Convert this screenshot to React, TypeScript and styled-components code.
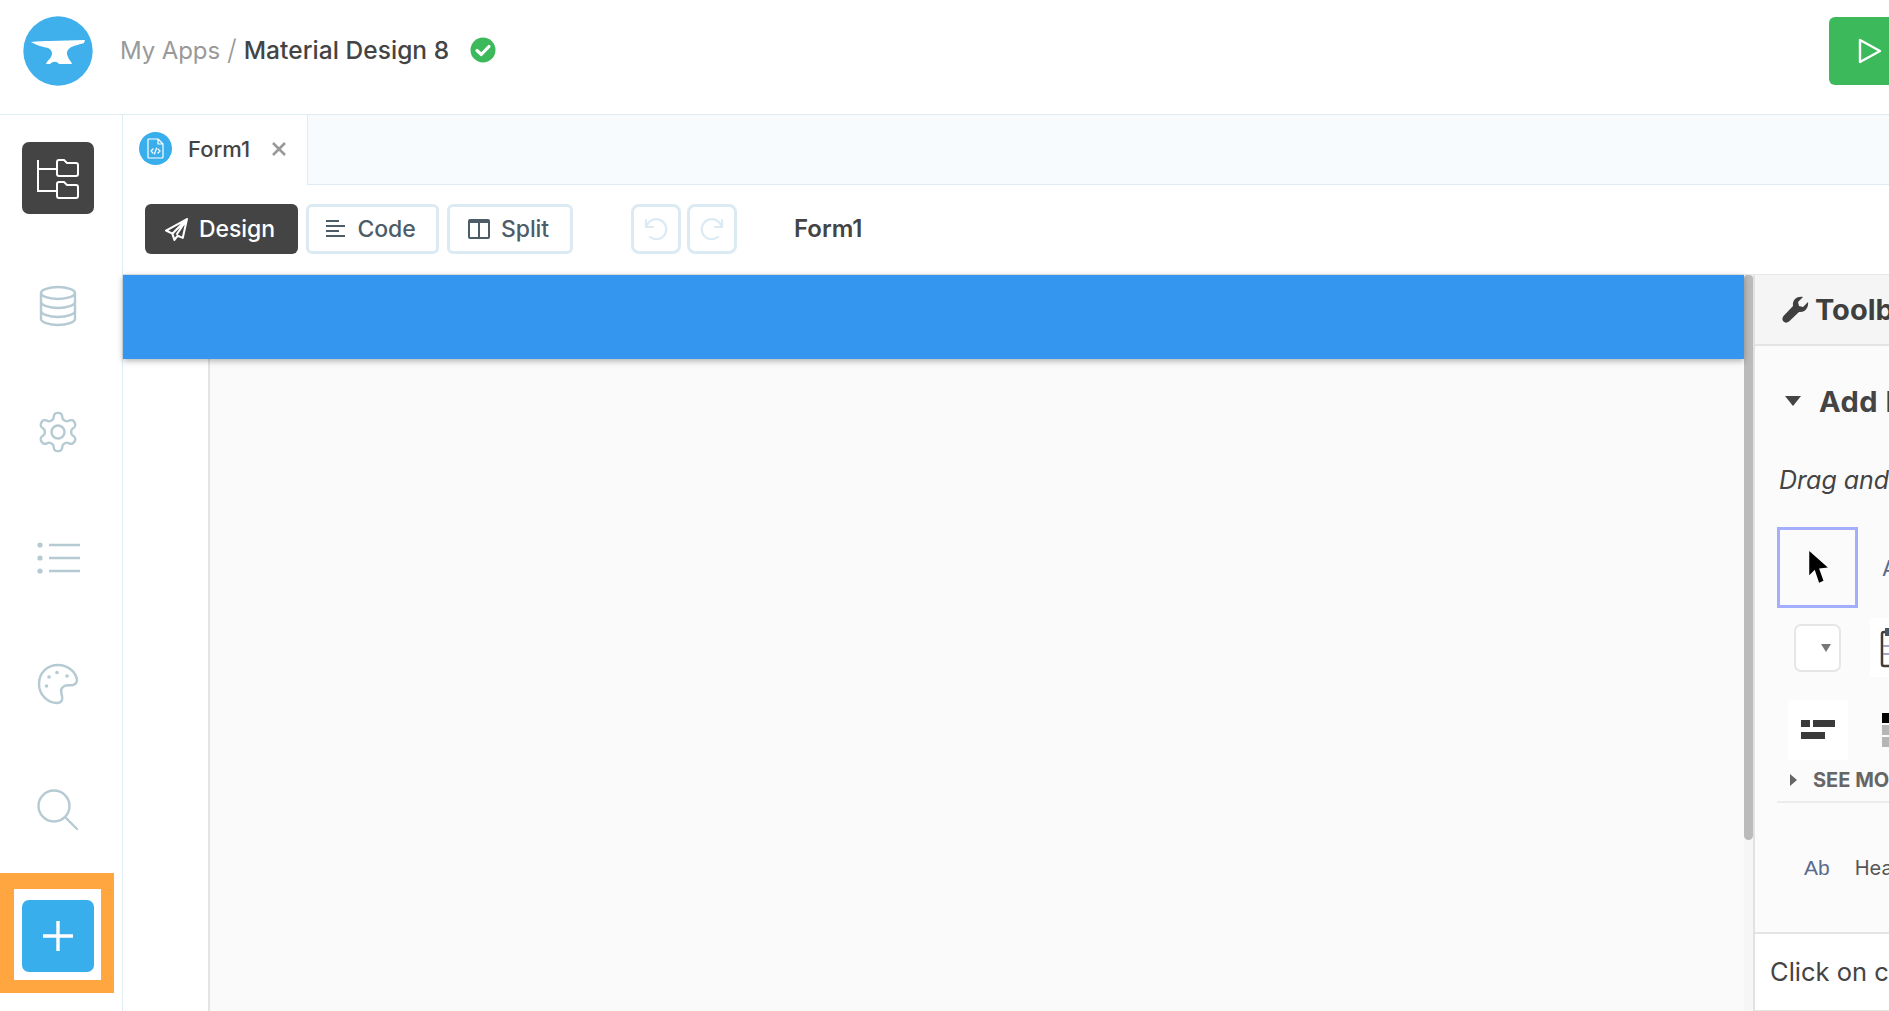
import React from "react";
import styled, { createGlobalStyle } from "styled-components";

const Global = createGlobalStyle`
  html, body { margin: 0; padding: 0; background: #fff; }
  body { font-family: Inter, "Liberation Sans", sans-serif; color: #444; }
  * { box-sizing: border-box; }
  svg { flex: none; }
`;

const Page = styled.div`
  width: 1889px; height: 1011px; overflow: hidden; display: flex; flex-direction: column; position: relative;
`;
const Header = styled.header`
  height: 115px; flex: none; display: flex; align-items: flex-start; padding: 16px 0 0 23px;
  border-bottom: 1px solid #dfecf3; background: #fff;
`;
const Logo = styled.svg` width: 70px; height: 70px; flex: none; `;
const Crumbs = styled.div`
  display: flex; align-items: center; height: 70px; margin-left: 27px; padding-bottom: 2px; font-size: 24.5px; white-space: nowrap; flex: 1;
`;
const CrumbLink = styled.span` color: #999; font-weight: 400; font-size: 24px; letter-spacing: -0.1px; `;
const Slash = styled.span` color: #999; margin: 0 7px 0 7px; font-weight: 300; font-size: 28px; `;
const CrumbTitle = styled.span` color: #444; font-weight: 500; letter-spacing: 0.05px; `;
const Check = styled.svg` width: 26px; height: 26px; margin-left: 21px; flex: none; `;
const RunButton = styled.div`
  width: 60px; height: 68px; margin-top: 1px; background: #3cb95a; border-radius: 6px 0 0 6px;
  display: flex; align-items: center; padding-left: 29px; flex: none;
`;

const Body = styled.div` flex: 1; display: flex; min-height: 0; `;
const Sidebar = styled.nav`
  width: 123px; flex: none; border-right: 1px solid #dfecf3; background: #fff;
  display: flex; flex-direction: column; align-items: flex-start; padding: 27px 0 0 22px; gap: 54px;
`;
const SideItem = styled.div<{ $active?: boolean; $add?: boolean }>`
  width: 72px; height: 72px; flex: none; border-radius: 7px; display: flex; align-items: center; justify-content: center;
  background: ${p => (p.$active ? "#444" : p.$add ? "#38aeec" : "transparent")};
  margin-bottom: ${p => (p.$active ? "2px" : "0")};
`;
const Highlight = styled.div`
  position: absolute; left: 0; top: 873px; width: 114px; height: 120px; pointer-events: none;
  border: solid #ffa640; border-width: 16px 13px 13px 14px;
`;

const Main = styled.div` flex: 1; min-width: 0; display: flex; flex-direction: column; `;
const TabStrip = styled.div` height: 70px; flex: none; display: flex; background: #f7fbfe; border-bottom: 1px solid #dfecf3; `;
const Tab = styled.div`
  width: 185px; height: 70px; flex: none; background: #fff; border-right: 1px solid #dfecf3;
  display: flex; align-items: center; padding: 0 0 3px 16px;
`;
const TabBadge = styled.div`
  width: 33px; height: 33px; border-radius: 50%; background: #38aeec; display: flex; align-items: center; justify-content: center; flex: none;
`;
const TabName = styled.span` margin-left: 16px; font-size: 22px; font-weight: 500; color: #444; `;
const TabClose = styled.svg` width: 14px; height: 14px; margin-left: 22px; flex: none; `;

const Toolbar = styled.div` height: 90px; flex: none; display: flex; align-items: flex-start; padding: 19px 0 0 22px; background: #fff; `;
const ModeButton = styled.div<{ $active?: boolean; $w: number }>`
  width: ${p => p.$w}px; height: 50px; border-radius: 6px; display: flex; align-items: center; justify-content: center; gap: 11px;
  font-size: 23px; font-weight: 500; letter-spacing: -0.1px; margin-right: 8px; flex: none;
  padding-right: 3px;
  background: ${p => (p.$active ? "#444" : "#fff")};
  color: ${p => (p.$active ? "#fff" : "#4d5d68")};
  border: ${p => (p.$active ? "none" : "3px solid #dcebf3")};
`;
const HistoryButton = styled.div<{ $first?: boolean }>`
  width: 50px; height: 50px; border: 3px solid #dcebf3; border-radius: 8px; background: #fff; flex: none;
  display: flex; align-items: center; justify-content: center;
  margin-left: ${p => (p.$first ? "50px" : "0")};
  margin-right: 6px;
`;
const FormTitle = styled.span` margin-left: 51px; line-height: 50px; font-size: 24px; font-weight: 600; color: #444; `;

const Content = styled.div` flex: 1; min-height: 0; display: flex; border-top: 1px solid #e8e8e8; margin-top: -1px; `;
const Canvas = styled.div` width: 1621px; flex: none; display: flex; flex-direction: column; position: relative; `;
const AppBar = styled.div` height: 84px; flex: none; background: #3596ef; box-shadow: 0 2px 6px rgba(0,0,0,.3); position: relative; z-index: 1; `;
const CanvasBody = styled.div` flex: 1; display: flex; `;
const Gutter = styled.div` width: 87px; flex: none; background: #fff; border-right: 2px solid #e4e4e4; `;
const Sheet = styled.div` flex: 1; background: #fafafa; `;
const ScrollTrack = styled.div` width: 11px; flex: none; background: #f6f6f6; border-right: 2px solid #e2e2e2; `;
const ScrollThumb = styled.div` width: 9px; height: 565px; background: #bbb; border-radius: 4px 4px 5px 5px; `;

const Panel = styled.aside` flex: 1; min-width: 0; display: flex; flex-direction: column; overflow: hidden; white-space: nowrap; background: #fbfbfb; `;
const PanelHeader = styled.div`
  height: 71px; flex: none; background: #f5f5f5; border-bottom: 2px solid #e4e4e4; display: flex; align-items: center; padding-left: 27px; gap: 6px;
  font-size: 29px; font-weight: 700; color: #3f3f3f;
`;
const PanelBody = styled.div` flex: 1; min-height: 0; overflow: hidden; position: relative; `;
const SectionTitle = styled.div`
  display: flex; align-items: center; height: 40px; margin-top: 35px; padding-left: 30px; gap: 18px;
  font-size: 29px; font-weight: 700; color: #444; letter-spacing: 0.5px;
`;
const Hint = styled.div` margin: 44px 0 0 24px; height: 30px; line-height: 30px; font-size: 25px; font-style: italic; color: #444; `;
const TileRow = styled.div<{ $top: number; $gap: number }>`
  display: flex; align-items: center; margin-top: ${p => p.$top}px; gap: ${p => p.$gap}px;
`;
const SelectedTile = styled.div`
  width: 81px; height: 81px; margin-left: 22px; flex: none; border: 3px solid #a3aeff; display: flex; align-items: center; justify-content: center;
`;
const TilePeek = styled.span` font-size: 22px; color: #5b6a8c; `;
const DropTile = styled.div`
  width: 47px; height: 48px; margin-left: 39px; flex: none; background: #fff; border: 2px solid #e6e6e6; border-radius: 7px;
  display: flex; align-items: center; justify-content: flex-end; padding: 0 8px 0 0;
`;
const WhiteTile = styled.div<{ $w: number; $ml: number; $h: number }>`
  width: ${p => p.$w}px; height: ${p => p.$h}px; margin-left: ${p => p.$ml}px; flex: none; background: #fff;
  display: flex; align-items: center; justify-content: center;
`;
const SeeMore = styled.div`
  display: flex; align-items: center; height: 30px; margin: 5px 0 0 35px; gap: 16px;
  font-size: 20px; font-weight: 700; color: #666;
`;
const Divider = styled.div` height: 2px; margin: 6px 0 0 22px; background: #ececec; `;
const TextRow = styled.div` display: flex; align-items: center; height: 30px; margin: 50px 0 0 49px; `;
const AbGlyph = styled.span` font-family: "Liberation Sans", sans-serif; font-size: 21px; color: #5b6a8c; `;
const HeadingLabel = styled.span` margin-left: 25px; font-size: 20px; color: #555; `;
const PanelFoot = styled.div`
  height: 79px; flex: none; background: #fff; border-top: 2px solid #e4e4e4; border-bottom: 1px solid #e4e4e4;
  display: flex; align-items: center; padding: 0 0 2px 15px; font-size: 25.5px; color: #444;
`;

const ic = { fill: "none", stroke: "#b5cad3", strokeWidth: 2.4, strokeLinecap: "round", strokeLinejoin: "round" } as const;

export default function App() {
  return (
    <Page>
      <Global />
      <Header>
        <Logo viewBox="23 16 70 70">
          <circle cx="58" cy="51" r="34.7" fill="#40b0ec" />
          <path d="M31 42 C38 41 44 41 50 41 L85 40 L84 43 C78 45 72 46 70 48 C67 50 66 53 68 57 C69 60 71 61 72 64 L59 64 C57 61 53 61 50 64 L46 64 C47 61 49 60 51 57 C53 53 52 50 48 48 C42 47 36 45 31 42 Z" fill="#fff" />
        </Logo>
        <Crumbs>
          <CrumbLink>My Apps</CrumbLink>
          <Slash>/</Slash>
          <CrumbTitle>Material Design 8</CrumbTitle>
          <Check viewBox="0 0 26 26">
            <circle cx="13" cy="13" r="12.5" fill="#3cb95a" />
            <path d="M7 13.5 L11.3 17.5 L19 9.5" fill="none" stroke="#fff" strokeWidth="3.2" strokeLinecap="round" strokeLinejoin="round" />
          </Check>
        </Crumbs>
        <RunButton>
          <svg width="24" height="26" viewBox="0 0 24 26">
            <path d="M2 2 L22 13 L2 24 Z" fill="none" stroke="#fff" strokeWidth="2.4" strokeLinejoin="round" />
          </svg>
        </RunButton>
      </Header>
      <Body>
        <Sidebar>
          <SideItem $active>
            <svg width="42" height="42" viewBox="0 0 42 42" fill="none" stroke="#fff" strokeWidth="2">
              <path d="M1 3 V34 H20 M1 12 H20" />
              <path d="M20 5 Q20 3 22 3 H27 L30 6 H39 Q41 6 41 8 V17 Q41 19 39 19 H22 Q20 19 20 17 Z" />
              <path d="M20 27 Q20 25 22 25 H27 L30 28 H39 Q41 28 41 30 V39 Q41 41 39 41 H22 Q20 41 20 39 Z" />
            </svg>
          </SideItem>
          <SideItem>
            <svg width="38" height="42" viewBox="0 0 38 42" {...ic}>
              <ellipse cx="19" cy="8" rx="17" ry="6" />
              <path d="M2 8 V34 C2 37 10 40 19 40 S36 37 36 34 V8" />
              <path d="M2 17 C2 20 10 23 19 23 S36 20 36 17" />
              <path d="M2 26 C2 29 10 32 19 32 S36 29 36 26" />
            </svg>
          </SideItem>
          <SideItem>
            <svg width="46" height="46" viewBox="0 0 24 24" fill="none" stroke="#b5cad3" strokeWidth="1.25" strokeLinecap="round" strokeLinejoin="round">
              <path d="M12.22 2h-.44a2 2 0 0 0-2 2v.18a2 2 0 0 1-1 1.73l-.43.25a2 2 0 0 1-2 0l-.15-.08a2 2 0 0 0-2.73.73l-.22.38a2 2 0 0 0 .73 2.73l.15.1a2 2 0 0 1 1 1.72v.51a2 2 0 0 1-1 1.74l-.15.09a2 2 0 0 0-.73 2.73l.22.38a2 2 0 0 0 2.73.73l.15-.08a2 2 0 0 1 2 0l.43.25a2 2 0 0 1 1 1.73V20a2 2 0 0 0 2 2h.44a2 2 0 0 0 2-2v-.18a2 2 0 0 1 1-1.73l.43-.25a2 2 0 0 1 2 0l.15.08a2 2 0 0 0 2.73-.73l.22-.39a2 2 0 0 0-.73-2.73l-.15-.08a2 2 0 0 1-1-1.74v-.5a2 2 0 0 1 1-1.74l.15-.09a2 2 0 0 0 .73-2.73l-.22-.38a2 2 0 0 0-2.73-.73l-.15.08a2 2 0 0 1-2 0l-.43-.25a2 2 0 0 1-1-1.73V4a2 2 0 0 0-2-2z" />
              <circle cx="12" cy="12" r="3.4" />
            </svg>
          </SideItem>
          <SideItem>
            <svg width="44" height="32" viewBox="0 0 44 32" fill="none" stroke="#b5cad3" strokeWidth="2.4">
              <circle cx="4" cy="3" r="2.6" fill="#b5cad3" stroke="none" />
              <circle cx="4" cy="16" r="2.6" fill="#b5cad3" stroke="none" />
              <circle cx="4" cy="29" r="2.6" fill="#b5cad3" stroke="none" />
              <path d="M13 3 H44 M13 16 H44 M13 29 H44" />
            </svg>
          </SideItem>
          <SideItem>
            <svg width="42" height="42" viewBox="0 0 42 42" {...ic}>
              <path d="M21 2 C10 2 2 10 2 21 C2 32 11 40 20 40 C25 40 26 36 25 33 C24 29 23 26 26 24 C29 21 32 23 36 22 C39 21 40 19 40 17 C39 9 31 2 21 2 Z" />
              <circle cx="12" cy="14" r="1.8" fill="#b5cad3" stroke="none" />
              <circle cx="20" cy="9.5" r="1.8" fill="#b5cad3" stroke="none" />
              <circle cx="30" cy="13" r="1.8" fill="#b5cad3" stroke="none" />
              <circle cx="9.5" cy="23" r="1.8" fill="#b5cad3" stroke="none" />
            </svg>
          </SideItem>
          <SideItem>
            <svg width="42" height="42" viewBox="0 0 42 42" {...ic}>
              <circle cx="17" cy="17" r="15.5" />
              <path d="M28.5 28.5 L40 40" />
            </svg>
          </SideItem>
          <SideItem $add>
            <svg width="32" height="32" viewBox="0 0 32 32" stroke="#fff" strokeWidth="3.4">
              <path d="M16 1 V31 M1 16 H31" />
            </svg>
          </SideItem>
        </Sidebar>
        <Main>
          <TabStrip>
            <Tab>
              <TabBadge>
                <svg width="17" height="21" viewBox="0 0 17 21" fill="none" stroke="#fff" strokeWidth="1.2" strokeLinecap="round" strokeLinejoin="round">
                  <path d="M2 1 H11 L16 6 V19 Q16 20 15 20 H2 Q1 20 1 19 V2 Q1 1 2 1 Z M11 1 V6 H16" />
                  <path d="M6 11 L4 13 L6 15 M11 11 L13 13 L11 15 M9.5 10 L7.5 16" />
                </svg>
              </TabBadge>
              <TabName>Form1</TabName>
              <TabClose viewBox="0 0 14 14" stroke="#999" strokeWidth="2.6">
                <path d="M1 1 L13 13 M13 1 L1 13" />
              </TabClose>
            </Tab>
          </TabStrip>
          <Toolbar>
            <ModeButton $active $w={153}>
              <svg width="23" height="23" viewBox="0 0 22 22" fill="none" stroke="#fff" strokeWidth="2" strokeLinejoin="round">
                <path d="M21 1 L1 12 L7 15 L9 21 L12 17 L17 19 Z M7 15 L21 1 L11 16" />
              </svg>
              Design
            </ModeButton>
            <ModeButton $w={133}>
              <svg width="20" height="20" viewBox="0 0 20 20" stroke="#4d5d68" strokeWidth="2">
                <path d="M0 2 H13 M0 7 H19 M0 12 H13 M0 17 H19" />
              </svg>
              Code
            </ModeButton>
            <ModeButton $w={126}>
              <svg width="22" height="20" viewBox="0 0 22 20" fill="none" stroke="#4d5d68" strokeWidth="2">
                <rect x="1" y="1" width="20" height="18" rx="1" />
                <path d="M11 1 V19 M1 3 H21" />
              </svg>
              Split
            </ModeButton>
            <HistoryButton $first>
              <svg width="24" height="24" viewBox="0 0 24 24" fill="none" stroke="#dcebf3" strokeWidth="2.2" strokeLinecap="round" strokeLinejoin="round">
                <path d="M2 3 V10 H9" />
                <path d="M2.5 10 A10 10 0 1 1 6 20" />
              </svg>
            </HistoryButton>
            <HistoryButton>
              <svg width="24" height="24" viewBox="0 0 24 24" fill="none" stroke="#dcebf3" strokeWidth="2.2" strokeLinecap="round" strokeLinejoin="round">
                <path d="M22 3 V10 H15" />
                <path d="M21.5 10 A10 10 0 1 0 18 20" />
              </svg>
            </HistoryButton>
            <FormTitle>Form1</FormTitle>
          </Toolbar>
          <Content>
            <Canvas>
              <AppBar />
              <CanvasBody>
                <Gutter />
                <Sheet />
              </CanvasBody>
            </Canvas>
            <ScrollTrack>
              <ScrollThumb />
            </ScrollTrack>
            <Panel>
              <PanelHeader>
                <svg width="27" height="27" viewBox="0 0 27 27">
                  <path d="M26 6 L21 11 L17 10 L16 6 L21 1 C16 0 10 3 11 10 L1.5 20 C0 22 0 24 1.5 25.5 C3 27 5 27 7 25.5 L17 16 C23 17 27 11 26 6 Z" fill="#3f3f3f" />
                </svg>
                Toolbox
              </PanelHeader>
              <PanelBody>
                <SectionTitle>
                  <svg width="16" height="10" viewBox="0 0 16 10"><path d="M0 0 H16 L8 10 Z" fill="#444" /></svg>
                  Add New Components
                </SectionTitle>
                <Hint>Drag and drop onto your page:</Hint>
                <TileRow $top={32} $gap={24}>
                  <SelectedTile>
                    <svg width="20" height="35" viewBox="0 0 18 32"><path d="M1 1 L1 23 L6 18 L10 30 L14 28 L10 17 L18 16 Z" fill="#000" /></svg>
                  </SelectedTile>
                  <TilePeek>A</TilePeek>
                </TileRow>
                <TileRow $top={10} $gap={29}>
                  <DropTile>
                    <svg width="10" height="8" viewBox="0 0 10 8"><path d="M0 0 H10 L5 8 Z" fill="#777" /></svg>
                  </DropTile>
                  <WhiteTile $w={20} $ml={0} $h={59}>
                    <svg width="20" height="40" viewBox="0 0 20 40">
                      <rect x="12" y="4" width="20" height="34" rx="2" fill="#fff" stroke="#4a3a30" strokeWidth="2.5" />
                      <rect x="15" y="0" width="5" height="8" fill="#456" />
                      <path d="M13 18 H20 M13 26 H20" stroke="#88b" strokeWidth="1.5" />
                    </svg>
                  </WhiteTile>
                </TileRow>
                <TileRow $top={23} $gap={34}>
                  <WhiteTile $w={60} $ml={33} $h={60}>
                    <svg width="34" height="22" viewBox="0 0 34 22" fill="#3a3a3a">
                      <rect x="0" y="1" width="9" height="7" />
                      <rect x="12" y="1" width="22" height="7" />
                      <rect x="0" y="13" width="24" height="7" />
                    </svg>
                  </WhiteTile>
                  <svg width="7" height="34" viewBox="0 0 7 34">
                    <rect y="0" width="7" height="10" fill="#000" />
                    <rect y="12" width="7" height="10" fill="#b5b5b5" />
                    <rect y="24" width="7" height="10" fill="#b5b5b5" />
                  </svg>
                </TileRow>
                <SeeMore>
                  <svg width="7" height="12" viewBox="0 0 7 12"><path d="M0 0 L7 6 L0 12 Z" fill="#666" /></svg>
                  SEE MORE
                </SeeMore>
                <Divider />
                <TextRow>
                  <AbGlyph>Ab</AbGlyph>
                  <HeadingLabel>Heading</HeadingLabel>
                </TextRow>
              </PanelBody>
              <PanelFoot>Click on components</PanelFoot>
            </Panel>
          </Content>
        </Main>
      </Body>
      <Highlight />
    </Page>
  );
}
